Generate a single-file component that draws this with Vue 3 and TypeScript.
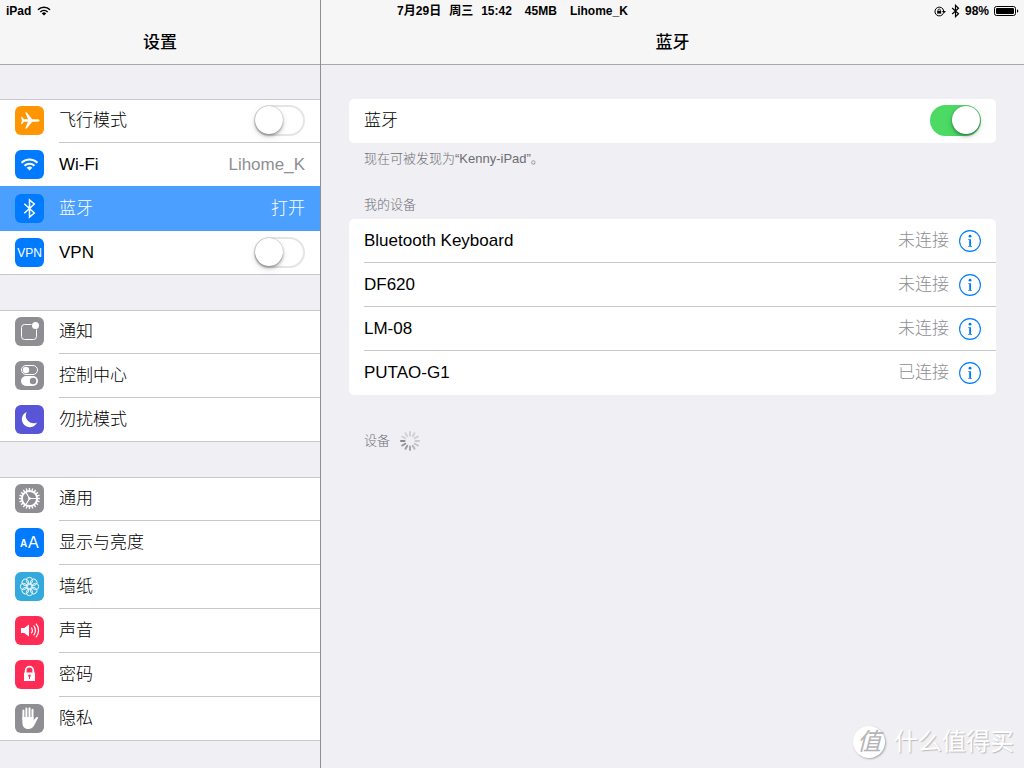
<script setup lang="ts">
import { reactive, ref } from 'vue'

type IconName =
  | 'airplane' | 'wifi' | 'bluetooth' | 'vpn' | 'notify' | 'control' | 'moon'
  | 'gear' | 'display' | 'wallpaper' | 'sound' | 'passcode' | 'privacy'

interface Item {
  icon: IconName
  label: string
  value?: string
  toggle?: boolean
  on?: boolean
  selected?: boolean
}

const groups = reactive<Item[][]>([
  [
    { icon: 'airplane', label: '飞行模式', toggle: true, on: false },
    { icon: 'wifi', label: 'Wi-Fi', value: 'Lihome_K' },
    { icon: 'bluetooth', label: '蓝牙', value: '打开', selected: true },
    { icon: 'vpn', label: 'VPN', toggle: true, on: false },
  ],
  [
    { icon: 'notify', label: '通知' },
    { icon: 'control', label: '控制中心' },
    { icon: 'moon', label: '勿扰模式' },
  ],
  [
    { icon: 'gear', label: '通用' },
    { icon: 'display', label: '显示与亮度' },
    { icon: 'wallpaper', label: '墙纸' },
    { icon: 'sound', label: '声音' },
    { icon: 'passcode', label: '密码' },
    { icon: 'privacy', label: '隐私' },
  ],
])

const bluetoothOn = ref(true)

const devices = [
  { name: 'Bluetooth Keyboard', status: '未连接' },
  { name: 'DF620', status: '未连接' },
  { name: 'LM-08', status: '未连接' },
  { name: 'PUTAO-G1', status: '已连接' },
]

// Opacity of each spinner spoke, clockwise from twelve o'clock.
const spokes = [0.3, 0.3, 0.32, 0.36, 0.44, 0.55, 0.7, 0.8, 0.9, 1, 0.3, 0.28]
const teeth = Array.from({ length: 20 }, (_, i) => i * 18)
const petals = Array.from({ length: 8 }, (_, i) => i * 45)
</script>

<template>
  <div class="screen">
    <div class="status">
      <div class="status-left">
        <span>iPad</span>
        <svg width="14" height="10" viewBox="0 0 14 10">
          <g fill="none" stroke="#000" stroke-width="1.6">
            <path d="M1 3.7a8.6 8.6 0 0 1 12 0" />
            <path d="M3.3 6a5.4 5.4 0 0 1 7.4 0" />
          </g>
          <path d="M4.8 7.4a3.2 3.2 0 0 1 4.4 0L7 9.6z" />
        </svg>
      </div>
      <div class="status-mid">
        <span class="date"><span>7月29日</span><span>周三</span><span>15:42</span></span>
        <span>45MB</span>
        <span>Lihome_K</span>
      </div>
      <div class="status-right">
        <svg width="12" height="11" viewBox="0 0 12 11">
          <path d="M9.4 7.2A4.4 4.4 0 1 1 9.7 5" fill="none" stroke="#000" stroke-width="1" />
          <path d="M7.9 5h4L9.9 7.4z" />
          <path d="M3.2 4.9h4v2.700h-4z" />
          <path d="M4 5V4.200a1.200 1.200 0 0 1 2.400 0V5" fill="none" stroke="#000" stroke-width=".8" />
        </svg>
        <svg width="9" height="14" viewBox="0 0 9 14">
          <path d="M1.200 4l6.300 5.800L4.500 12.700V1.300l3 2.900L1.200 10" fill="none" stroke="#000" stroke-width="1.200" />
        </svg>
        <span>98%</span>
        <svg width="25" height="10" viewBox="0 0 25 10">
          <rect x=".5" y=".5" width="21" height="9" rx="2" fill="none" stroke="#000" />
          <rect x="2" y="2" width="18" height="6" rx="1" />
          <path d="M23 3.200c1.800.6 1.800 3 0 3.600z" />
        </svg>
      </div>
    </div>

    <aside class="side">
      <header class="bar"><h1>设置</h1></header>
      <nav class="groups">
        <ul v-for="(group, g) in groups" :key="g" class="group">
          <li v-for="item in group" :key="item.icon">
            <component
              :is="item.toggle ? 'label' : 'a'"
              :href="item.toggle ? undefined : '#' + item.icon"
              class="row"
              :class="{ selected: item.selected }"
            >
              <svg class="icon" :class="item.icon" width="29" height="29" viewBox="0 0 29 29" aria-hidden="true">
                <path
                  v-if="item.icon === 'airplane'"
                  fill="#fff"
                  d="M24.600 14.500c0-.8-1.200-1.200-2.600-1.200h-4.800L11.800 6.400h-1.600l2.800 6.900H8.900L7 10.800H6l.9 3.700L6 18.200h1l1.900-2.500H13l-2.800 6.900h1.600l5.400-6.900H22c1.400 0 2.600-.4 2.600-1.200z"
                />
                <template v-else-if="item.icon === 'wifi'">
                  <g fill="none" stroke="#fff" stroke-width="2">
                    <path d="M6.500 12.800a11.300 11.300 0 0 1 16 0" />
                    <path d="M9.500 15.700a7.200 7.200 0 0 1 10 0" />
                  </g>
                  <path fill="#fff" d="M11.700 17.800a4.300 4.300 0 0 1 5.600 0l-2.800 2.800z" />
                </template>
                <path
                  v-else-if="item.icon === 'bluetooth'"
                  fill="none"
                  stroke="#fff"
                  stroke-width="1.500"
                  d="M9.300 9.700l10 9.300-4.800 4.100V5.900l4.800 4.100-10 9.300"
                />
                <text v-else-if="item.icon === 'vpn'" x="14.500" y="18.800" text-anchor="middle" font-size="12" fill="#fff">VPN</text>
                <template v-else-if="item.icon === 'notify'">
                  <path d="M16.500 7.500H9.500a3 3 0 0 0-3 3v9a3 3 0 0 0 3 3h9a3 3 0 0 0 3-3v-7" fill="none" stroke="#fff" />
                  <circle cx="20.500" cy="8.500" r="3.500" fill="#fff" />
                </template>
                <template v-else-if="item.icon === 'control'">
                  <rect x="6.500" y="4.500" width="16" height="9" rx="4.500" fill="none" stroke="#fff" />
                  <circle cx="11" cy="9" r="3.200" fill="#fff" />
                  <rect x="6" y="15" width="17" height="10" rx="5" fill="#fff" />
                  <circle cx="18" cy="20" r="3.200" fill="#8e8e93" />
                </template>
                <path
                  v-else-if="item.icon === 'moon'"
                  fill="#fff"
                  d="M11.700 7A7.900 7.900 0 1 0 22 17.400 7.700 7.700 0 0 1 11.700 7z"
                />
                <template v-else-if="item.icon === 'gear'">
                  <g stroke="#fff" stroke-width="1.400">
                    <path v-for="a in teeth" :key="a" d="M14.500 4v3" :transform="`rotate(${a} 14.5 14.5)`" />
                  </g>
                  <g fill="none" stroke="#fff">
                    <circle cx="14.500" cy="14.500" r="7.600" stroke-width="2" />
                    <path d="M14.500 14.500h7.500M14.500 14.500l-3.800-6.500M14.500 14.500l-3.800 6.500" stroke-width="1.100" />
                  </g>
                  <circle cx="14.500" cy="14.500" r="1.300" fill="#fff" />
                </template>
                <template v-else-if="item.icon === 'display'">
                  <text x="5" y="19" font-size="10" font-weight="700" fill="#fff">A</text>
                  <text x="13" y="20" font-size="16" fill="#fff">A</text>
                </template>
                <g v-else-if="item.icon === 'wallpaper'" fill="none" stroke="#fff" stroke-width=".9">
                  <circle v-for="a in petals" :key="a" cx="14.500" cy="8.500" r="3.200" :transform="`rotate(${a} 14.5 14.5)`" />
                  <circle cx="14.500" cy="14.500" r="2.200" />
                </g>
                <template v-else-if="item.icon === 'sound'">
                  <path d="M6 12h3.200l4.800-3.600v12.200L9.200 17H6z" fill="#fff" />
                  <g fill="none" stroke="#fff" stroke-width="1.200">
                    <path d="M16.200 11.600a4.500 4.500 0 0 1 0 5.800" />
                    <path d="M18.600 9.600a7.500 7.500 0 0 1 0 9.800" />
                    <path d="M21 7.600a10.600 10.600 0 0 1 0 13.800" />
                  </g>
                </template>
                <template v-else-if="item.icon === 'passcode'">
                  <path d="M10.700 13V10.500a3.800 3.800 0 0 1 7.600 0V13" fill="none" stroke="#fff" stroke-width="1.800" />
                  <rect x="9" y="12.500" width="11" height="8.500" rx=".5" fill="#fff" />
                  <circle cx="14.500" cy="15.700" r="1.300" fill="#ff2d55" />
                  <path d="M14 16h1v3h-1z" fill="#ff2d55" />
                </template>
                <template v-else>
                  <path
                    d="M8.400 6.500v9M11.400 4.500v10M14.500 4.300v10M17.500 5.800v10"
                    fill="none"
                    stroke="#fff"
                    stroke-width="2"
                    stroke-linecap="round"
                  />
                  <path
                    fill="#fff"
                    d="M7.400 13h11.100v3.600c1.200-1.800 2.400-3.500 3.600-3.600 1.200-.1 1.300.7.700 1.600-1.600 2.600-2.600 5.400-4 7.500-1.300 2-3 3-5.400 3-4.100 0-6-3-6-6.600z"
                  />
                </template>
              </svg>
              <span class="cell">
                <span class="label">{{ item.label }}</span>
                <input v-if="item.toggle" v-model="item.on" type="checkbox" class="switch" role="switch" />
                <span v-else-if="item.value" class="value">{{ item.value }}</span>
              </span>
            </component>
          </li>
        </ul>
      </nav>
    </aside>

    <main class="main">
      <header class="bar"><h1>蓝牙</h1></header>
      <div class="detail">
        <section>
          <label class="card power">
            <span class="label">蓝牙</span>
            <input v-model="bluetoothOn" type="checkbox" class="switch" role="switch" />
          </label>
          <p class="note">现在可被发现为“Kenny-iPad”。</p>
        </section>
        <section>
          <h2>我的设备</h2>
          <ul class="card">
            <li v-for="d in devices" :key="d.name" class="device">
              <span class="label">{{ d.name }}</span>
              <span class="value">{{ d.status }}</span>
              <button type="button" class="info" :aria-label="d.name">
                <svg width="22" height="22" viewBox="0 0 22 22" aria-hidden="true">
                  <circle cx="11" cy="11" r="10.400" fill="none" stroke="#007aff" stroke-width="1.100" />
                  <circle cx="11" cy="6.200" r="1.400" fill="#007aff" />
                  <path d="M9.200 9.200H12v6.700h1v.8H9.200v-.8h1V10h-1z" fill="#007aff" />
                </svg>
              </button>
            </li>
          </ul>
        </section>
        <section class="search">
          <h2>设备</h2>
          <svg width="20" height="20" viewBox="0 0 20 20" aria-hidden="true">
            <path
              v-for="(o, i) in spokes"
              :key="i"
              d="M10 1v3.500"
              stroke="#8a8a8f"
              stroke-width="2"
              stroke-linecap="round"
              :opacity="o"
              :transform="`rotate(${i * 30} 10 10)`"
            />
          </svg>
        </section>
      </div>
    </main>

    <div class="mark">
      <span class="seal">值</span>
      <span>什么值得买</span>
    </div>
  </div>
</template>

<style>
body {
  background: #efeff4;
}
</style>

<style scoped>
.screen {
  position: relative;
  display: grid;
  grid-template-columns: 321px 1fr;
  min-height: 100vh;
  background: #efeff4;
  color: #000;
  font: 17px/24px "Liberation Sans", "Noto Sans CJK SC", sans-serif;
}
h1, h2, p, ul {
  margin: 0;
  padding: 0;
  list-style: none;
}
svg {
  display: block;
  flex: none;
}
.status {
  position: absolute;
  top: 0;
  left: 0;
  right: 0;
  display: grid;
  grid-template-columns: 1fr auto 1fr;
  align-items: center;
  height: 20px;
  padding: 0 5px 0 6px;
  font-size: 12px;
  line-height: 22px;
  font-weight: 700;
}
.status-left, .status-mid, .status-right, .date {
  display: flex;
  align-items: center;
}
.status-left { gap: 6px; }
.status-mid { gap: 13px; }
.date { gap: 8px; }
.status-right {
  justify-content: flex-end;
  gap: 5px;
}
.side {
  box-sizing: border-box;
  border-right: 1px solid #8e8e93;
}
.bar {
  box-sizing: border-box;
  height: 65px;
  padding-top: 20px;
  border-bottom: 1px solid #a7a7ac;
  background: #f6f6f6;
  text-align: center;
}
h1 {
  font-size: 17px;
  font-weight: 500;
  line-height: 46px;
}
.groups {
  display: flex;
  flex-direction: column;
  gap: 35px;
  padding: 34px 0 27px;
}
.group {
  background: #fff;
  box-shadow: inset 0 1px #c8c7cc, inset 0 -1px #c8c7cc;
}
.row {
  display: flex;
  align-items: flex-start;
  gap: 15px;
  padding-left: 15px;
  color: #000;
  text-decoration: none;
}
.icon {
  margin-top: 7px;
  border-radius: 6px;
  background: #8e8e93;
  font-family: "Liberation Sans", sans-serif;
}
.airplane { background: #ff9500; }
.wifi, .bluetooth, .vpn, .display { background: #007aff; }
.moon { background: #5856d6; }
.wallpaper { background: #34aadc; }
.sound, .passcode { background: #ff2d55; }
.cell {
  box-sizing: border-box;
  display: flex;
  flex: 1;
  align-items: center;
  justify-content: space-between;
  height: 44px;
  padding-right: 15px;
  border-bottom: 1px solid #c8c7cc;
}
li:last-child .cell { border-color: transparent; }
.label, .value { font-weight: 300; }
.value { color: #8e8e93; }
.selected {
  margin-top: -1px;
  padding-top: 1px;
  position: relative;
  background: #4ba0ff;
  color: #fff;
}
.selected .cell { border-color: transparent; }
.selected .value { color: #fff; }
.switch {
  appearance: none;
  box-sizing: border-box;
  flex: none;
  width: 51px;
  height: 31px;
  margin: 0;
  border: 2px solid #e5e5e5;
  border-radius: 16px;
  background: #fff;
}
.switch::before {
  content: "";
  display: block;
  width: 28px;
  height: 28px;
  margin-top: -1px;
  margin-left: -1px;
  border-radius: 50%;
  background: #fff;
  box-shadow: 0 2px 3px rgba(0, 0, 0, 0.3), 0 0 1px rgba(0, 0, 0, 0.4), 0 3px 8px rgba(0, 0, 0, 0.1);
}
.switch:checked {
  border-color: #4cd964;
  background: #4cd964;
}
.switch:checked::before {
  margin-left: 20px;
}
.detail {
  padding: 34px 28px;
}
.card {
  border-radius: 5px;
  background: #fff;
}
.power {
  box-sizing: border-box;
  display: flex;
  align-items: center;
  justify-content: space-between;
  height: 44px;
  padding: 0 15px 1px;
}
.note, h2 {
  color: #6d6d72;
  font-size: 13px;
  font-weight: 300;
  line-height: 20px;
}
.note { padding: 6px 15px 0; }
h2 { padding: 26px 15px 4px; }
.device {
  box-sizing: border-box;
  display: flex;
  align-items: center;
  gap: 10px;
  height: 44px;
  margin-left: 15px;
  padding-right: 15px;
  border-bottom: 1px solid #c8c7cc;
}
.device:last-child { border-color: transparent; }
.device .label { flex: 1; }
.info {
  padding: 0;
  border: 0;
  background: none;
}
.search {
  display: flex;
  align-items: center;
  gap: 10px;
  padding: 36px 15px 0;
}
.search h2 { padding: 0; }
.mark {
  position: absolute;
  right: 10px;
  bottom: 10px;
  display: flex;
  align-items: center;
  gap: 9px;
  color: #fff;
  font-size: 24px;
  line-height: 32px;
  text-shadow: 1px 1px 1px #bbb;
}
.seal {
  width: 32px;
  height: 32px;
  border-radius: 50%;
  background: #fff;
  box-shadow: 1px 1px 2px #aaa;
  color: #b4b4b8;
  font-style: italic;
  text-align: center;
  text-shadow: none;
}
</style>
